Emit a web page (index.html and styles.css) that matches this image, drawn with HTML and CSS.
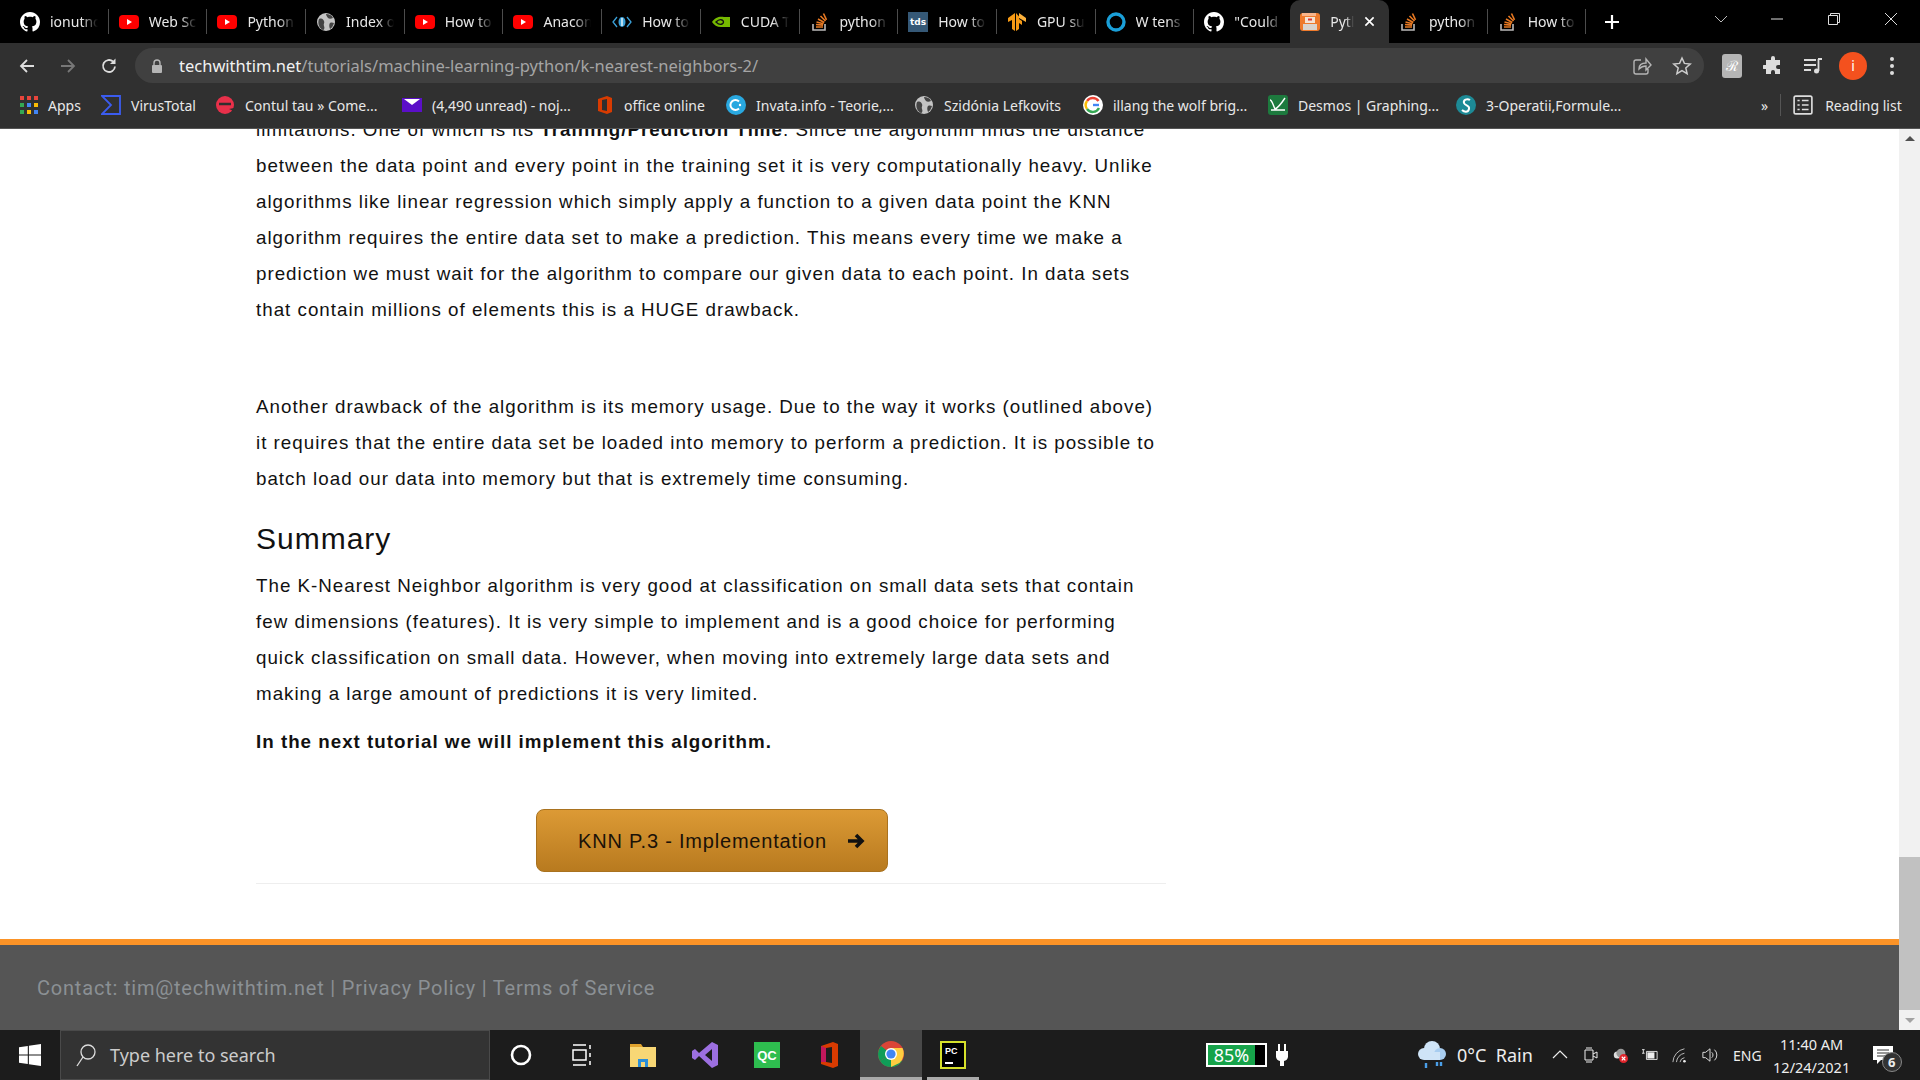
FILE: index.html

```html
<!DOCTYPE html>
<html lang="en">
<head>
  <meta charset="UTF-8">
  <title>K-Nearest Neighbors</title>
  <link rel="stylesheet" href="styles.css">
</head>
<body>
  <svg class="sprite" aria-hidden="true">
    <symbol id="i-github" viewBox="0 0 16 16"><path fill="#fff" fill-rule="evenodd" d="M8 0C3.58 0 0 3.58 0 8c0 3.54 2.29 6.53 5.47 7.59.4.07.55-.17.55-.38 0-.19-.01-.82-.01-1.49-2.01.37-2.53-.49-2.69-.94-.09-.23-.48-.94-.82-1.13-.28-.15-.68-.52-.01-.53.63-.01 1.08.58 1.23.82.72 1.21 1.87.87 2.33.66.07-.52.28-.87.51-1.07-1.78-.2-3.64-.89-3.64-3.95 0-.87.31-1.59.82-2.15-.08-.2-.36-1.02.08-2.12 0 0 .67-.21 2.2.82.64-.18 1.32-.27 2-.27s1.36.09 2 .27c1.53-1.04 2.2-.82 2.2-.82.44 1.1.16 1.92.08 2.12.51.56.82 1.27.82 2.15 0 3.07-1.87 3.75-3.65 3.95.29.25.54.73.54 1.48 0 1.07-.01 1.93-.01 2.2 0 .21.15.46.55.38A8.013 8.013 0 0016 8c0-4.42-3.58-8-8-8z"/></symbol>
    <symbol id="i-yt" viewBox="0 0 20 20"><rect y="3" width="20" height="14" rx="4" fill="#f00"/><path d="M8 7l5 3-5 3z" fill="#fff"/></symbol>
    <symbol id="i-globe" viewBox="0 0 20 20"><circle cx="10" cy="10" r="9" fill="#c4c4c4"/><path d="M3 7c3-1 4 0 5 2s-1 3 0 5 0 4-1 4C4 17 1 12 3 7zM10 2c3 0 6 1 7 4-2 1-4 1-5 0s-2-3-2-4zM14 11c2-1 3 0 4 0-1 3-2 5-4 6-1-2-1-5 0-6z" fill="#444"/></symbol>
    <symbol id="i-so" viewBox="0 0 20 20"><path d="M3 12v6h12v-6" fill="none" stroke="#bcbbbb" stroke-width="1.6"/><path d="M6 15h7M6 12.5l7 .6M6.5 10l7 1.8M8 7l6.3 3.5M10.5 4l5 5M13.5 1.5l3 6.3" fill="none" stroke="#e87922" stroke-width="1.6"/></symbol>
    <symbol id="i-nvidia" viewBox="0 0 20 20"><path d="M1 10c3-5 8-6 12-5l6 0v10h-9C6 15 3 13 1 10z" fill="#76b900"/><path d="M5 10c2-2 4-3 6-2 2 1 2 3 0 4s-4 0-6-2z" fill="none" stroke="#111" stroke-width="1.4"/></symbol>
    <symbol id="i-tds" viewBox="0 0 20 20"><rect width="20" height="20" fill="#355876"/><text x="10" y="13" text-anchor="middle" class="tds">tds</text></symbol>
    <symbol id="i-tf" viewBox="0 0 20 20"><path d="M9 1v18l3-2v-6l3 2V9l-3-2V4.500zM8 1v18l-3-2V8L1 10V6z" fill="#f79a14"/><path d="M12 1l7 5v4l-7-4z" fill="#fbb03b"/></symbol>
    <symbol id="i-ring" viewBox="0 0 20 20"><circle cx="10" cy="10" r="8" fill="none" stroke="#1a9fd8" stroke-width="3.400"/></symbol>
    <symbol id="i-bracket" viewBox="0 0 20 20"><path d="M5 5l-4 5 4 5M15 5l4 5-4 5" fill="none" stroke="#3aa0d8" stroke-width="1.300"/><ellipse cx="10" cy="10" rx="3.500" ry="5" fill="#3aa0d8"/><path d="M10 6v8" stroke="#fff" stroke-width="1.300"/></symbol>
    <symbol id="i-twt" viewBox="0 0 20 20"><rect y="1" width="20" height="18" rx="3" fill="#ee7a2c"/><rect x="2" y="1" width="14" height="3" fill="#f9b48a"/><rect x="5" y="5" width="10" height="6" fill="#f4e3d3"/><rect x="3" y="12" width="14" height="6" fill="#d9d4ce"/><path d="M8 7.500h4" stroke="#d33" stroke-width="2"/></symbol>
  </svg>

  <header class="browser">
    <div class="tabstrip">
      <div class="tab"><svg class="favicon"><use href="#i-github"/></svg><span class="tab-title">ionutnc</span></div>
      <div class="tab"><svg class="favicon"><use href="#i-yt"/></svg><span class="tab-title">Web Sc</span></div>
      <div class="tab"><svg class="favicon"><use href="#i-yt"/></svg><span class="tab-title">Python</span></div>
      <div class="tab"><svg class="favicon"><use href="#i-globe"/></svg><span class="tab-title">Index o</span></div>
      <div class="tab"><svg class="favicon"><use href="#i-yt"/></svg><span class="tab-title">How to</span></div>
      <div class="tab"><svg class="favicon"><use href="#i-yt"/></svg><span class="tab-title">Anacon</span></div>
      <div class="tab"><svg class="favicon"><use href="#i-bracket"/></svg><span class="tab-title">How to</span></div>
      <div class="tab"><svg class="favicon"><use href="#i-nvidia"/></svg><span class="tab-title">CUDA T</span></div>
      <div class="tab"><svg class="favicon"><use href="#i-so"/></svg><span class="tab-title">python</span></div>
      <div class="tab"><svg class="favicon"><use href="#i-tds"/></svg><span class="tab-title">How to</span></div>
      <div class="tab"><svg class="favicon"><use href="#i-tf"/></svg><span class="tab-title">GPU su</span></div>
      <div class="tab"><svg class="favicon"><use href="#i-ring"/></svg><span class="tab-title">W tens</span></div>
      <div class="tab tab-before-active"><svg class="favicon"><use href="#i-github"/></svg><span class="tab-title">"Could</span></div>
      <div class="tab tab-active"><svg class="favicon"><use href="#i-twt"/></svg><span class="tab-title tab-title-short">Pytl</span>
        <svg class="tab-close" viewBox="0 0 12 12"><path d="M1.500 1.500l9 9M10.500 1.500l-9 9" stroke="#fff" stroke-width="1.800"/></svg>
      </div>
      <div class="tab"><svg class="favicon"><use href="#i-so"/></svg><span class="tab-title">python</span></div>
      <div class="tab"><svg class="favicon"><use href="#i-so"/></svg><span class="tab-title">How to</span></div>
      <svg class="newtab" viewBox="0 0 16 16"><path d="M8 1v14M1 8h14" stroke="#fff" stroke-width="2.200"/></svg>
      <div class="win-controls">
        <svg class="win-btn" viewBox="0 0 14 14"><path d="M1 4l6 6 6-6" fill="none" stroke="#bbb"/></svg>
        <svg class="win-btn" viewBox="0 0 14 14"><path d="M1 7h12" stroke="#ddd"/></svg>
        <svg class="win-btn" viewBox="0 0 14 14"><path d="M1.500 3.500h9v9h-9zM3.500 3.500v-2h9v9h-2" fill="none" stroke="#ddd"/></svg>
        <svg class="win-btn" viewBox="0 0 14 14"><path d="M1 1l12 12M13 1L1 13" stroke="#ddd"/></svg>
      </div>
    </div>

    <div class="toolbar">
      <svg class="nav-icon" viewBox="0 0 18 18"><path d="M16 9H3M9 3L3 9l6 6" fill="none" stroke="#ddd" stroke-width="1.800"/></svg>
      <svg class="nav-icon" viewBox="0 0 18 18"><path d="M2 9h13M9 3l6 6-6 6" fill="none" stroke="#777" stroke-width="1.800"/></svg>
      <svg class="nav-icon" viewBox="0 0 18 18"><path d="M15 9.500A6 6 0 1 1 13 4.500" fill="none" stroke="#ddd" stroke-width="1.800"/><path d="M15.500 1.500v5.500h-5.500z" fill="#ddd"/></svg>
      <div class="omnibox">
        <svg class="lock" viewBox="0 0 12 14"><path d="M3 6V4a3 3 0 0 1 6 0v2" fill="none" stroke="#b5b5b5" stroke-width="1.400"/><rect x="1" y="6" width="10" height="8" rx="1" fill="#b5b5b5"/></svg>
        <span class="url"><span class="url-host">techwithtim.net</span>/tutorials/machine-learning-python/k-nearest-neighbors-2/</span>
        <svg class="omni-icon omni-share" viewBox="0 0 20 20"><path d="M9 4H4a2 2 0 0 0-2 2v10a2 2 0 0 0 2 2h10a2 2 0 0 0 2-2v-3M7 13c0-4 3-6 7-6V3l5 6-5 5v-4c-3 0-5 1-7 3z" fill="none" stroke="#b5b5b5" stroke-width="1.400"/></svg>
        <svg class="omni-icon" viewBox="0 0 20 20"><path d="M10 2l2.400 5.400 5.800.6-4.400 3.900 1.300 5.700L10 14.600l-5.100 3 1.300-5.700L1.800 8l5.800-.6z" fill="none" stroke="#ccc" stroke-width="1.500"/></svg>
      </div>
      <div class="ext-icons">
        <span class="ext-r">ℛ</span>
        <svg class="ext-icon" viewBox="0 0 20 20"><path d="M8 2a2 2 0 0 1 4 0v2h5v5h-2a2 2 0 0 0 0 4h2v5h-5v-2a2 2 0 0 0-4 0v2H3v-5H1a2 2 0 0 1 0-4h2V4h5z" fill="#ddd"/></svg>
        <svg class="ext-icon" viewBox="0 0 20 20"><path d="M1 4h12M1 9h12M1 14h7" stroke="#ddd" stroke-width="1.800"/><path d="M15 3h4M15.500 3v12" stroke="#ddd" stroke-width="1.800"/><circle cx="13.500" cy="15" r="2.500" fill="#ddd"/></svg>
        <span class="avatar">i</span>
        <span class="kebab"><i></i><i></i><i></i></span>
      </div>
    </div>

    <div class="bookmarks">
      <div class="bm"><svg class="bm-icon" viewBox="0 0 18 18"><rect width="4" height="4" fill="#e8453c"/><rect x="7" width="4" height="4" fill="#e8453c"/><rect x="14" width="4" height="4" fill="#e8453c"/><rect y="7" width="4" height="4" fill="#34a853"/><rect x="7" y="7" width="4" height="4" fill="#4285f4"/><rect x="14" y="7" width="4" height="4" fill="#fbbc05"/><rect y="14" width="4" height="4" fill="#34a853"/><rect x="7" y="14" width="4" height="4" fill="#fbbc05"/><rect x="14" y="14" width="4" height="4" fill="#4285f4"/></svg>Apps</div>
      <div class="bm"><svg class="bm-icon" viewBox="0 0 20 20"><path d="M1 1h18v18H1l9-9z" fill="none" stroke="#3b5cf0" stroke-width="1.800"/></svg>VirusTotal</div>
      <div class="bm"><svg class="bm-icon" viewBox="0 0 20 20"><circle cx="10" cy="10" r="9" fill="#e8304a"/><path d="M4 9h12" stroke="#2f2f2f" stroke-width="2.500"/><path d="M14 14l5-1v3z" fill="#2f2f2f"/></svg>Contul tau » Come...</div>
      <div class="bm"><svg class="bm-icon" viewBox="0 0 20 20"><rect y="3" width="20" height="14" fill="#5b0fc8"/><path d="M2 4h16l-8 6z" fill="#fff"/></svg>(4,490 unread) - noj...</div>
      <div class="bm bm-tight"><svg class="bm-icon" viewBox="0 0 20 20"><path d="M2 4l9-3 5 2v14l-5 2-9-3z" fill="#d83b01"/><path d="M6 5l5-1v12l-5-1z" fill="#2f2f2f"/></svg>office online</div>
      <div class="bm"><svg class="bm-icon" viewBox="0 0 20 20"><circle cx="10" cy="10" r="10" fill="#29a8e0"/><path d="M13 6.500a5 5 0 1 0 0 7" fill="none" stroke="#fff" stroke-width="2"/><circle cx="14" cy="10" r="1.200" fill="#fff"/></svg>Invata.info - Teorie,...</div>
      <div class="bm"><svg class="bm-icon"><use href="#i-globe"/></svg>Szidónia Lefkovits</div>
      <div class="bm"><svg class="bm-icon" viewBox="0 0 20 20"><circle cx="10" cy="10" r="10" fill="#fff"/><path d="M16 10h-6" stroke="#4285f4" stroke-width="2.400"/><path d="M15.500 6A7 7 0 0 0 4 6" fill="none" stroke="#ea4335" stroke-width="2.400"/><path d="M4 6a7 7 0 0 0 0 8" fill="none" stroke="#fbbc05" stroke-width="2.400"/><path d="M4 14a7 7 0 0 0 12-1" fill="none" stroke="#34a853" stroke-width="2.400"/></svg>illang the wolf brig...</div>
      <div class="bm"><svg class="bm-icon" viewBox="0 0 20 20"><rect width="20" height="20" rx="3" fill="#1d7a3e"/><path d="M2 5c2 0 3 5 5 9 3-1 6-5 10-11M3 15h14" fill="none" stroke="#fff" stroke-width="1.400"/></svg>Desmos | Graphing...</div>
      <div class="bm"><svg class="bm-icon" viewBox="0 0 20 20"><circle cx="10" cy="10" r="10" fill="#1d8a96"/><path d="M14 5c-3-2-7 0-6 3s6 2 5 6-5 3-7 1" fill="none" stroke="#fff" stroke-width="2"/></svg>3-Operatii,Formule...</div>
      <div class="bm-end">
        <span class="bm-more">»</span>
        <span class="bm-sep"></span>
        <svg class="bm-icon" viewBox="0 0 18 18"><rect x="1" y="1" width="16" height="16" rx="1.500" fill="none" stroke="#ddd" stroke-width="1.500"/><path d="M4 5h2M8 5h6M4 9h2M8 9h6M4 13h2M8 13h6" stroke="#ddd" stroke-width="1.400"/></svg>
        <span>Reading list</span>
      </div>
    </div>
  </header>

  <div class="viewport">
    <main class="page">
      <article class="content">
        <p>limitations. One of which is its <strong>Training/Prediction Time</strong>. Since the algorithm finds the distance between the data point and every point in the training set it is very computationally heavy. Unlike algorithms like linear regression which simply apply a function to a given data point the KNN algorithm requires the entire data set to make a prediction. This means every time we make a prediction we must wait for the algorithm to compare our given data to each point. In data sets that contain millions of elements this is a HUGE drawback.</p>
        <p class="para-gap">&nbsp;</p>
        <p>Another drawback of the algorithm is its memory usage. Due to the way it works (outlined above) it requires that the entire data set be loaded into memory to perform a prediction. It is possible to batch load our data into memory but that is extremely time consuming.</p>
        <h2>Summary</h2>
        <p>The K-Nearest Neighbor algorithm is very good at classification on small data sets that contain few dimensions (features). It is very simple to implement and is a good choice for performing quick classification on small data. However, when moving into extremely large data sets and making a large amount of predictions it is very limited.</p>
        <p><strong>In the next tutorial we will implement this algorithm.</strong></p>
        <div class="next-row">
          <a class="next-btn">KNN P.3 - Implementation
            <svg class="next-arrow" viewBox="0 0 18 16"><path d="M1 8h13M9 2l6 6-6 6" fill="none" stroke="#111" stroke-width="3.600"/></svg>
          </a>
        </div>
        <hr class="rule">
      </article>
      <footer class="site-footer">Contact: tim@techwithtim.net | Privacy Policy | Terms of Service</footer>
    </main>
    <aside class="scrollbar">
      <span class="arrow-up"></span>
      <span class="thumb"></span>
      <span class="arrow-down"></span>
    </aside>
  </div>

  <div class="taskbar">
    <div class="start"><svg viewBox="0 0 20 20" class="start-logo"><path d="M0 3l8-1.200V9.500H0zM9 1.600L20 0v9.500H9zM0 10.500h8v7.700L0 17zM9 10.500h11V20L9 18.400z" fill="#fff"/></svg></div>
    <div class="search">
      <svg class="search-icon" viewBox="0 0 20 24"><circle cx="12" cy="9" r="7" fill="none" stroke="#ddd" stroke-width="1.300"/><path d="M7 14l-6 9" stroke="#ddd" stroke-width="1.300"/></svg>
      Type here to search
    </div>
    <div class="slot slot-narrow"><svg class="tb-icon" viewBox="0 0 24 24"><circle cx="12" cy="12" r="9" fill="none" stroke="#fff" stroke-width="2.600"/></svg></div>
    <div class="slot slot-narrow"><svg class="tb-icon" viewBox="0 0 24 24"><path d="M3 2h13M3 22h13M3 7h13v10H3zM20 2v4M20 10v4M20 18v4" fill="none" stroke="#fff" stroke-width="1.500"/></svg></div>
    <div class="slot"><svg class="tb-icon tb-large" viewBox="0 0 28 28"><path d="M1 3h11l2 3h-13z" fill="#e0a32e"/><rect x="1" y="6" width="26" height="20" fill="#f8d775"/><path d="M9 26v-8h10v8h-3v-5h-4v5z" fill="#2b8fd8"/></svg></div>
    <div class="slot"><svg class="tb-icon tb-large" viewBox="0 0 28 28"><path d="M21 1l6 3v20l-6 3L8 15l-4 4-3-2V10l3-2 4 4zM21 8l-7 6 7 6z" fill="#9c6fe0" fill-rule="evenodd"/></svg></div>
    <div class="slot"><span class="qc">QC</span></div>
    <div class="slot"><svg class="tb-icon tb-large" viewBox="0 0 28 28"><path d="M6 5l12-4 5 2v22l-5 2-12-4z" fill="#d83b01"/><path d="M11 7l6-1v16l-6-1z" fill="#1d1d1d"/><path d="M6 5l5 2v14l-5 0z" fill="#c2185b"/></svg></div>
    <div class="slot slot-active"><svg class="tb-icon tb-large" viewBox="0 0 28 28"><circle cx="14" cy="14" r="13" fill="#db4437"/><path d="M14 14L3 21a13 13 0 0 1-2-7 13 13 0 0 1 3-8z" fill="#0f9d58"/><path d="M14 14l11 7A13 13 0 0 1 3 21z" fill="#0f9d58"/><path d="M14 8h11.500a13 13 0 0 1-3 15L14 27z" fill="#ffcd40"/><circle cx="14" cy="14" r="6" fill="#fff"/><circle cx="14" cy="14" r="4.600" fill="#4285f4"/></svg></div>
    <div class="slot slot-open"><span class="pc"><span class="pc-text">PC</span><span class="pc-line"></span></span></div>

    <div class="battery"><span class="battery-fill">85%</span><span class="battery-rest"></span></div>
    <svg class="plug" viewBox="0 0 12 22"><path d="M3 0v7M9 0v7" stroke="#fff" stroke-width="2"/><path d="M0 7h12v6a5 5 0 0 1-4 4v5H4v-5a5 5 0 0 1-4-4z" fill="#fff"/></svg>

    <div class="weather">
      <svg class="weather-icon" viewBox="0 0 30 30"><circle cx="15" cy="9" r="8" fill="#cfe4f7"/><circle cx="7" cy="14" r="6" fill="#cfe4f7"/><circle cx="23" cy="14" r="6" fill="#a8cdf0"/><rect x="7" y="12" width="16" height="8" fill="#cfe4f7"/><path d="M9 23v5M20 22v4M24 22v4" stroke="#4a9fe8" stroke-width="2.400"/></svg>
      <span>0°C&nbsp; Rain</span>
    </div>
    <div class="tray">
      <svg class="tray-icon" viewBox="0 0 16 16"><path d="M1 11l7-7 7 7" fill="none" stroke="#eee" stroke-width="1.200"/></svg>
      <svg class="tray-icon" viewBox="0 0 16 16"><path d="M4 1h6M4 15h6M3 3v10h8V3zM11 7l4-2v6l-4-2" fill="none" stroke="#eee"/></svg>
      <svg class="tray-icon" viewBox="0 0 18 18"><circle cx="6" cy="9" r="4" fill="#ddd"/><circle cx="10" cy="7" r="5" fill="#999"/><circle cx="13" cy="13" r="5" fill="#e0252c"/><path d="M11 11l4 4M15 11l-4 4" stroke="#fff" stroke-width="1.300"/></svg>
      <svg class="tray-icon" viewBox="0 0 18 16"><path d="M5 4h12v9H5zM0 6h3M1.500 2v4M0 2h3" fill="none" stroke="#eee"/><rect x="6" y="5" width="8" height="7" fill="#eee"/></svg>
      <svg class="tray-icon" viewBox="0 0 18 18"><path d="M1 17A16 16 0 0 1 14 2M5 17A11 11 0 0 1 14 7M9 17a6 6 0 0 1 5-5" fill="none" stroke="#ccc"/><circle cx="14" cy="16" r="1.500" fill="#eee"/></svg>
      <svg class="tray-icon" viewBox="0 0 18 18"><path d="M1 6h3l5-4v14l-5-4H1zM11 6a4 4 0 0 1 0 6M14 3a8 8 0 0 1 0 12" fill="none" stroke="#eee"/></svg>
      <span class="lang">ENG</span>
    </div>
    <div class="clock"><span>11:40 AM</span><span>12/24/2021</span></div>
    <div class="notify">
      <svg class="notify-icon" viewBox="0 0 20 18"><path d="M0 0h20v14H8l-4 4v-4H0z" fill="#fff"/><path d="M4 4h12M4 7h12M4 10h8" stroke="#333"/></svg>
      <span class="notify-badge">6</span>
    </div>
  </div>
</body>
</html>
```

FILE: styles.css

```css
* { box-sizing: border-box; }
html, body { margin: 0; height: 100%; }
body { display: flex; flex-direction: column; height: 100vh; overflow: hidden; font-family: "Liberation Sans", Arial, sans-serif; background: #fff; }
.sprite { position: absolute; width: 0; height: 0; }
.tds { font: bold 9px "DejaVu Sans", sans-serif; fill: #fff; }

/* browser chrome */
.browser { flex: none; font-family: "Noto Sans", sans-serif; color: #e8e8e8; }
.tabstrip { display: flex; align-items: center; height: 43px; padding-left: 10px; background: #000; }
.tab { position: relative; display: flex; align-items: center; flex: none; gap: 10px; width: 98.7px; height: 43px; padding-left: 10px; font-size: 14px; }
.tab::after { content: ""; position: absolute; right: 0; top: 9px; width: 1px; height: 25px; background: #4c4c4c; }
.tab-before-active { width: 96px; }
.tab-before-active::after, .tab-active::after { display: none; }
.tab-active { background: #303030; border-radius: 10px 10px 0 0; }
.favicon { flex: none; width: 20px; height: 20px; }
.tab-title { width: 48px; overflow: hidden; white-space: nowrap; -webkit-mask-image: linear-gradient(to right, #000 65%, transparent); mask-image: linear-gradient(to right, #000 65%, transparent); }
.tab-title-short { width: 24px; }
.tab-close { width: 11px; height: 11px; }
.newtab { width: 16px; height: 16px; margin-left: 18px; }
.win-controls { display: flex; margin-left: auto; }
.win-btn { width: 14px; height: 14px; margin-right: 43px; margin-top: -6px; }
.win-btn:first-child { margin-right: 42px; }
.win-btn:last-child { margin-right: 22px; }

.toolbar { display: flex; align-items: center; height: 45px; padding-left: 18px; background: #303030; }
.nav-icon { width: 18px; height: 18px; margin-right: 23px; }
.omnibox { display: flex; align-items: center; width: 1569px; height: 35px; margin-left: -6px; padding: 0 12px 0 16px; background: #404040; border-radius: 18px; font-size: 16.500px; }
.lock { width: 12px; height: 14px; margin-right: 16px; }
.url { color: #a5a5a5; }
.url-host { color: #f2f2f2; }
.omni-icon { width: 20px; height: 20px; margin-left: 20px; }
.omni-share { margin-left: auto; }
.ext-icons { display: flex; align-items: center; margin-left: 18px; }
.ext-r { display: flex; align-items: center; justify-content: center; width: 20px; height: 24px; border-radius: 3px; background: #b5b5b5; color: #fff; font-size: 14px; margin-right: 21px; }
.ext-icon { width: 20px; height: 20px; margin-right: 20px; }
.avatar { display: flex; align-items: center; justify-content: center; width: 28px; height: 28px; margin-left: -4px; border-radius: 50%; background: #f4511e; color: #fff; font-size: 14px; }
.kebab { display: flex; flex-direction: column; gap: 3px; margin-left: 23px; }
.kebab i { display: block; width: 4px; height: 4px; border-radius: 50%; background: #ddd; }

.bookmarks { display: grid; grid-template-columns: 81px 114px 187px 194px 130px 188px 169px 185px 188px 305px 1fr; align-items: center; height: 41px; padding: 0 0 6px 20px; background: #303030; border-bottom: 1px solid #555; font-size: 14px; }
.bm { display: flex; align-items: center; gap: 10px; white-space: nowrap; }
.bm-tight { gap: 8px; }
.bm-icon { flex: none; width: 20px; height: 20px; }
.bm:first-child .bm-icon { width: 18px; height: 18px; }
.bm-end { display: flex; align-items: center; gap: 12px; white-space: nowrap; }
.bm-sep { width: 1px; height: 22px; background: #555; }

/* page */
.viewport { flex: 1; display: flex; min-height: 0; }
.page { flex: 1; display: flex; flex-direction: column; overflow: hidden; }
.content { width: 912px; margin: -17px 0 0 256px; font-size: 18.780px; line-height: 36px; letter-spacing: 1px; color: #111; }
.content p { margin: 0 0 12px; }
.content .para-gap { margin-bottom: 13px; }
.content h2 { margin: 24px 0 11px; font-size: 30px; line-height: 36px; font-weight: 400; }
.next-row { display: flex; justify-content: center; margin-top: 49px; }
.next-btn { display: flex; align-items: center; gap: 20px; width: 352px; height: 63px; padding-left: 41px; border: 1px solid #a9721f; border-radius: 8px; background: linear-gradient(#dc9a35, #b87a1f); color: #1a1208; font-size: 20px; letter-spacing: 0.800px; }
.next-arrow { width: 18px; height: 16px; }
.rule { height: 1px; margin: 11px 2px 0 0; border: 0; background: #eee; }
.site-footer { margin-top: auto; height: 91px; display: flex; align-items: center; padding-left: 37px; border-top: 6px solid #fb9327; background: #555; font-family: Roboto, sans-serif; font-size: 20px; letter-spacing: 0.800px; color: #8b9094; }
.scrollbar { position: relative; flex: none; width: 21px; background: #f1f1f1; }
.arrow-up, .arrow-down { position: absolute; left: 6px; width: 0; height: 0; border: 5px solid transparent; }
.arrow-up { top: 7px; border-top: 0; border-bottom: 5px solid #505050; }
.arrow-down { bottom: 7px; border-bottom: 0; border-top: 5px solid #a3a3a3; }
.thumb { position: absolute; left: 0; right: 0; top: 728px; height: 153px; background: #c1c1c1; }

/* windows taskbar */
.taskbar { flex: none; display: flex; align-items: center; height: 50px; background: #1c1c1c; color: #eee; font-family: "Noto Sans", sans-serif; }
.start { display: flex; align-items: center; justify-content: center; width: 60px; height: 100%; }
.start-logo { width: 22px; height: 22px; }
.search { display: flex; align-items: center; gap: 14px; width: 430px; height: 100%; padding-left: 15px; background: #333; border: 1px solid #4a4a4a; font-size: 18px; color: #ccc; }
.search-icon { width: 20px; height: 24px; }
.slot { display: flex; align-items: center; justify-content: center; width: 62px; height: 100%; }
.slot-narrow { width: 61px; }
.slot-active { background: #484848; border-bottom: 3px solid #aaa; }
.slot-open { position: relative; }
.slot-open::after { content: ""; position: absolute; left: 5px; right: 5px; bottom: 0; height: 3px; background: #aaa; }
.tb-icon { width: 24px; height: 24px; }
.tb-large { width: 28px; height: 28px; }
.qc { display: flex; align-items: center; justify-content: center; width: 26px; height: 26px; background: #2ebd4f; color: #fff; font: bold 13px "Liberation Sans", sans-serif; }
.pc { display: flex; flex-direction: column; width: 26px; height: 28px; padding: 3px; background: #000; border: 2px solid #d6e02a; color: #fff; font: bold 9px/10px "Liberation Sans", sans-serif; }
.pc-line { width: 8px; height: 2px; margin-top: 6px; background: #fff; }
.battery { display: flex; width: 61px; height: 24px; margin-left: 222px; padding: 2px; background: #fff; }
.battery-fill { display: flex; align-items: center; justify-content: center; width: 47px; background: #16a34a; color: #fff; font: 18px "Noto Sans", sans-serif; }
.battery-rest { flex: 1; background: #000; }
.plug { width: 12px; height: 22px; margin-left: 9px; }
.weather { display: flex; align-items: center; gap: 10px; margin-left: 129px; font-size: 18px; width: 120px; }
.weather-icon { flex: none; width: 30px; height: 30px; }
.tray { display: flex; align-items: center; gap: 14px; margin-left: 15px; }
.tray-icon { width: 16px; height: 18px; }
.lang { font-size: 14px; margin-left: 1px; }
.clock { display: flex; flex-direction: column; align-items: center; gap: 5px; width: 92px; font-size: 14.500px; line-height: 18px; margin-left: 4px; }
.notify { position: relative; margin-left: 15px; }
.notify-icon { display: block; width: 20px; height: 18px; }
.notify-badge { position: absolute; left: 9px; top: 6px; display: flex; align-items: center; justify-content: center; width: 20px; height: 20px; border: 1px solid #888; border-radius: 50%; background: #333; font-size: 13px; font-weight: 700; }
```
